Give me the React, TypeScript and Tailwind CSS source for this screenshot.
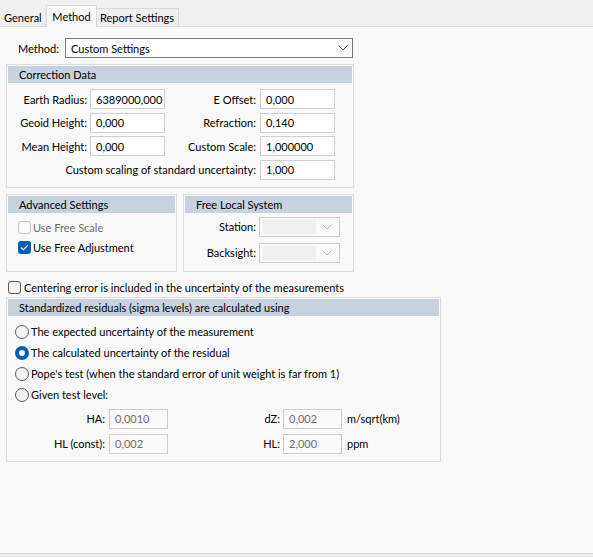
import React from "react";

const font = { fontFamily: 'Lato, "Segoe UI", sans-serif' };

function Chevron({ color = "#5f5f5f" }: { color?: string }) {
  return (
    <svg width="10" height="6" viewBox="0 0 10 6" className="shrink-0">
      <path d="M0.5 0.5 L5 5 L9.5 0.5" fill="none" stroke={color} strokeWidth="1" />
    </svg>
  );
}

function Input({ value, w = "w-[75px]", disabled = false }: { value: string; w?: string; disabled?: boolean }) {
  return (
    <div
      className={`${w} h-[20px] flex items-center px-[5px] border ${
        disabled ? "border-[#cccccc] bg-[#f9f9f9] text-[#6d6d6d]" : "border-[#d0d0d0] bg-white text-black"
      } shrink-0`}
    >
      {value}
    </div>
  );
}

function Header({ title }: { title: string }) {
  return <div className="h-[17px] bg-[#c7d2de] flex items-center pl-[11px] text-black leading-none">{title}</div>;
}

function Group({ title, className = "", children }: { title: string; className?: string; children: React.ReactNode }) {
  return (
    <div className={`border border-[#dcdcdc] p-[1px] flex flex-col ${className}`}>
      <Header title={title} />
      {children}
    </div>
  );
}

function Checkbox({ checked = false, disabled = false }: { checked?: boolean; disabled?: boolean }) {
  if (checked) {
    return (
      <div className="w-[13px] h-[13px] rounded-[3px] bg-[#005fb8] flex items-center justify-center shrink-0">
        <svg width="9" height="7" viewBox="0 0 9 7">
          <path d="M1 3.5 L3.4 5.8 L8 1" fill="none" stroke="white" strokeWidth="1.1" />
        </svg>
      </div>
    );
  }
  return (
    <div
      className={`w-[13px] h-[13px] rounded-[3px] border shrink-0 ${
        disabled ? "border-[#c5c5c5] bg-[#f9f9f9]" : "border-[#5a5a5a] bg-[#f4f4f4]"
      }`}
    />
  );
}

function Radio({ checked = false }: { checked?: boolean }) {
  if (checked) {
    return (
      <div className="w-[14px] h-[14px] rounded-full bg-[#005fb8] flex items-center justify-center shrink-0">
        <div className="w-[6px] h-[6px] rounded-full bg-white" />
      </div>
    );
  }
  return <div className="w-[14px] h-[14px] rounded-full border border-[#5a5a5a] bg-[#f4f4f4] shrink-0" />;
}

function SmallCombo() {
  return (
    <div className="w-[81px] h-[20px] border border-[#cccccc] bg-[#f9f9f9] flex items-center pl-[3px] pr-[7px] justify-between">
      <div className="w-[53px] h-[14px] bg-[#efefef]" />
      <Chevron color="#b5b5b5" />
    </div>
  );
}

export default function App() {
  return (
    <div style={font} className="w-[593px] h-[557px] bg-[#f9f9f9] text-[11px] text-black flex flex-col leading-none whitespace-nowrap">
      {/* Tabs */}
      <div className="h-[27px] bg-[#f0f0f0] border-b border-[#dadada] flex items-end shrink-0">
        <div className="h-[18px] w-[46px] pl-[4px] flex items-center border-r border-[#e4e4e4]">General</div>
        <div className="h-[22px] w-[51px] mb-[-1px] bg-[#f9f9f9] border border-b-0 border-[#dadada] flex items-center justify-center">
          Method
        </div>
        <div className="h-[18px] w-[82px] pl-[3px] flex items-center border border-b-0 border-l-0 border-[#dadada] bg-[#f0f0f0]">
          Report Settings
        </div>
      </div>

      {/* Content */}
      <div className="flex-1 flex flex-col pl-[6px] pt-[11px]">
        <div className="flex items-center h-[20px]">
          <div className="w-[56px] text-right pr-[3px]">Method:</div>
          <div className="w-[288px] h-[20px] border border-[#7a7a7a] bg-white flex items-center justify-between pl-[5px] pr-[4px] ml-[3px]">
            <span>Custom Settings</span>
            <Chevron />
          </div>
        </div>

        <Group title="Correction Data" className="w-[348px] mt-[6px]">
          <div className="grid grid-cols-[82px_75px_95px_75px] gap-y-[3.5px] pt-[6px] pb-[6px] items-center">
            <div className="text-right pr-[3px]">Earth Radius:</div>
            <Input value="6389000,000" />
            <div className="text-right pr-[4px]">E Offset:</div>
            <Input value="0,000" />

            <div className="text-right pr-[3px]">Geoid Height:</div>
            <Input value="0,000" />
            <div className="text-right pr-[4px]">Refraction:</div>
            <Input value="0,140" />

            <div className="text-right pr-[3px]">Mean Height:</div>
            <Input value="0,000" />
            <div className="text-right pr-[4px]">Custom Scale:</div>
            <Input value="1,000000" />

            <div className="col-span-3 text-right pr-[4px]">Custom scaling of standard uncertainty:</div>
            <Input value="1,000" />
          </div>
        </Group>

        <div className="flex gap-[6px] mt-[6px] w-[348px]">
          <Group title="Advanced Settings" className="w-[171px] h-[78px]">
            <div className="flex flex-col pl-[10px] pt-[8px] gap-[7px]">
              <div className="flex items-center gap-[2px] h-[13px] text-[#6d6d6d]">
                <Checkbox disabled />
                <span>Use Free Scale</span>
              </div>
              <div className="flex items-center gap-[2px] h-[13px]">
                <Checkbox checked />
                <span>Use Free Adjustment</span>
              </div>
            </div>
          </Group>
          <Group title="Free Local System" className="w-[171px] h-[78px]">
            <div className="flex flex-col pt-[4px] gap-[6px]">
              <div className="flex items-center">
                <div className="w-[74px] text-right pr-[3px]">Station:</div>
                <SmallCombo />
              </div>
              <div className="flex items-center">
                <div className="w-[74px] text-right pr-[3px]">Backsight:</div>
                <SmallCombo />
              </div>
            </div>
          </Group>
        </div>

        <div className="flex items-center gap-[3px] mt-[9px] ml-[2px] h-[14px]">
          <Checkbox />
          <span>Centering error is included in the uncertainty of the measurements</span>
        </div>

        <Group title="Standardized residuals (sigma levels) are calculated using" className="w-[435px] mt-[2px] h-[165px]">
          <div className="flex flex-col pl-[7px] pt-[9px] gap-[7px]">
            <div className="flex items-center gap-[2px] h-[14px]">
              <Radio />
              <span>The expected uncertainty of the measurement</span>
            </div>
            <div className="flex items-center gap-[2px] h-[14px]">
              <Radio checked />
              <span>The calculated uncertainty of the residual</span>
            </div>
            <div className="flex items-center gap-[2px] h-[14px]">
              <Radio />
              <span>Pope's test (when the standard error of unit weight is far from 1)</span>
            </div>
            <div className="flex items-center gap-[2px] h-[14px]">
              <Radio />
              <span>Given test level:</span>
            </div>
          </div>
          <div className="grid grid-cols-[101px_59px_115px_59px_auto] gap-y-[5px] items-center mt-[7px]">
            <div className="text-right pr-[4px]">HA:</div>
            <Input value="0,0010" w="w-[59px]" disabled />
            <div className="text-right pr-[3px]">dZ:</div>
            <Input value="0,002" w="w-[59px]" disabled />
            <div className="pl-[5px]">m/sqrt(km)</div>

            <div className="text-right pr-[4px]">HL (const):</div>
            <Input value="0,002" w="w-[59px]" disabled />
            <div className="text-right pr-[3px]">HL:</div>
            <Input value="2,000" w="w-[59px]" disabled />
            <div className="pl-[5px]">ppm</div>
          </div>
        </Group>
      </div>

      <div className="h-[4px] border-t border-[#dcdcdc] bg-[#efefef] shrink-0" />
    </div>
  );
}
